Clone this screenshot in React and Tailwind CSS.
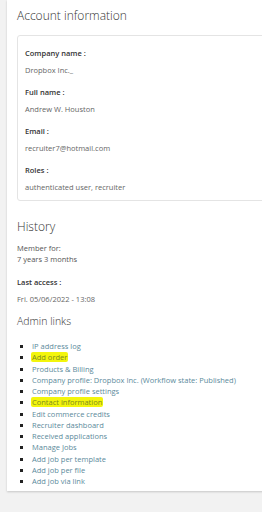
import React from 'react';

const fields = [
  { label: 'Company name :', value: 'Dropbox Inc._' },
  { label: 'Full name :', value: 'Andrew W. Houston' },
  { label: 'Email :', value: 'recruiter7@hotmail.com' },
  { label: 'Roles :', value: 'authenticated user, recruiter' },
];

const links = [
  { text: 'IP address log' },
  { text: 'Add order', mark: true },
  { text: 'Products & Billing' },
  { text: 'Company profile: Dropbox Inc. (Workflow state: Published)' },
  { text: 'Company profile settings' },
  { text: 'Contact information', mark: true },
  { text: 'Edit commerce credits' },
  { text: 'Recruiter dashboard' },
  { text: 'Received applications' },
  { text: 'Manage Jobs' },
  { text: 'Add job per template' },
  { text: 'Add job per file' },
  { text: 'Add job via link' },
];

export default function App() {
  return (
    <div className="w-[262px] h-[512px] overflow-hidden bg-[#f2f2f2] font-['Open_Sans',sans-serif]">
      <div className="ml-[7px] w-[280px] h-[491px] bg-white shadow-[0_1px_2px_rgba(0,0,0,0.18)] pl-[10px] pt-[6px]">
        <h2 className="text-[12px] leading-[20px] font-light text-[#333]">Account information</h2>

        <div className="mt-[9px] border border-[#e4e4e4] rounded-[3px] pl-[7px] pt-[9px] pb-[4px] space-y-[5px]">
          {fields.map((f) => (
            <div key={f.label}>
              <div className="text-[7.5px] leading-[17px] font-semibold text-[#333]">{f.label}</div>
              <div className="text-[7.5px] leading-[17px] text-[#666]">{f.value}</div>
            </div>
          ))}
        </div>

        <h2 className="mt-[16px] text-[12px] leading-[20px] font-light text-[#333]">History</h2>
        <div className="mt-[6px] text-[7.5px] leading-[11px] text-[#555]">
          <div>Member for:</div>
          <div>7 years 3 months</div>
        </div>
        <div className="mt-[9px] text-[7.5px] leading-[17px] font-semibold text-[#333]">Last access :</div>
        <div className="text-[7.5px] leading-[17px] text-[#666]">Fri. 05/06/2022 - 13:08</div>

        <h3 className="mt-[4px] text-[10.5px] leading-[18px] font-light text-[#333]">Admin links</h3>
        <ul className="mt-[11px] pl-[15px] list-[square] marker:text-[#222] text-[7.5px] leading-[11.25px]">
          {links.map((l) => (
            <li key={l.text} className="text-[#5b8a9b]">
              {l.mark ? (
                <span className="bg-[#f3f50c] rounded-[2px] px-[1px] -mx-[1px] text-[#7a8a20]">{l.text}</span>
              ) : (
                l.text
              )}
            </li>
          ))}
        </ul>
      </div>
    </div>
  );
}
